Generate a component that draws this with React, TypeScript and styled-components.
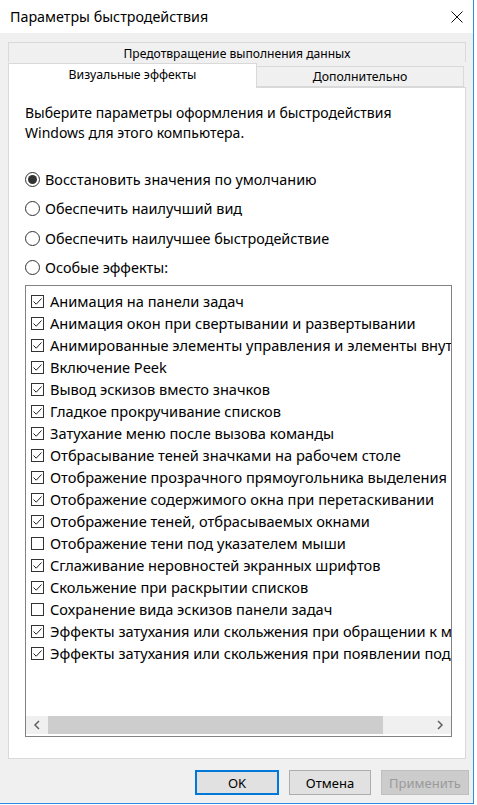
import React from "react";
import styled, { createGlobalStyle } from "styled-components";

const Global = createGlobalStyle`
  html, body { margin: 0; padding: 0; background: #ffffff; }
  body { font-family: "Noto Sans", "Open Sans", sans-serif; color: #000; }
  * { box-sizing: border-box; }
`;

const Win = styled.div`
  width: 474px;
  height: 804px;
  border-right: 1px solid #2b8ee4;
  border-bottom: 1px solid #2b8ee4;
  background: #f0f0f0;
  display: flex;
  flex-direction: column;
`;

const TitleBar = styled.div`
  height: 33px;
  background: #ffffff;
  display: flex;
  align-items: center;
  justify-content: space-between;
  padding: 0 10px 0 10px;
`;

const Title = styled.div`
  font-size: 14.3px;
  color: #000;
  margin-top: -1px;
`;

const Close = styled.div`
  width: 26px;
  height: 20px;
  display: flex;
  align-items: center;
  justify-content: center;
  margin-right: -7px;
`;

const Body = styled.div`
  flex: 1;
  display: flex;
  flex-direction: column;
  padding: 9px 7px 0 8px;
`;

const TopTab = styled.div`
  height: 20px;
  width: 458px;
  border: 1px solid #d9d9d9;
  border-bottom: none;
  display: flex;
  align-items: center;
  justify-content: center;
  font-size: 12.1px;
  padding-top: 1px;
`;

const TabRow = styled.div`
  display: flex;
  align-items: flex-end;
  height: 25px;
  width: 458px;
  position: relative;
  z-index: 1;
`;

const Tab = styled.div<{ $active?: boolean }>`
  height: ${(p) => (p.$active ? "25px" : "21px")};
  width: ${(p) => (p.$active ? "249px" : "207px")};
  margin-bottom: ${(p) => (p.$active ? "-1px" : "0")};
  background: ${(p) => (p.$active ? "#ffffff" : "#f0f0f0")};
  border: 1px solid #d9d9d9;
  border-bottom: ${(p) => (p.$active ? "none" : "1px solid #d9d9d9")};
  border-left: ${(p) => (p.$active ? "1px solid #d9d9d9" : "none")};
  display: flex;
  align-items: center;
  justify-content: center;
  font-size: 12.3px;
  padding-bottom: ${(p) => (p.$active ? "4px" : "0")};
`;

const Panel = styled.div`
  width: 458px;
  height: 672px;
  background: #ffffff;
  border: 1px solid #d9d9d9;
  padding: 15px 0 0 16px;
  display: flex;
  flex-direction: column;
`;

const Intro = styled.div`
  font-size: 14px;
  line-height: 20px;
  margin-bottom: 26px;
`;

const Radios = styled.div`
  display: flex;
  flex-direction: column;
  gap: 9px;
  margin-bottom: 7px;
`;

const RadioRow = styled.div`
  display: flex;
  align-items: center;
  height: 20.5px;
  font-size: 14.4px;
  gap: 5px;
`;

const RadioCircle = styled.span<{ $on?: boolean }>`
  width: 15px;
  height: 15px;
  border-radius: 50%;
  border: 1px solid #333333;
  display: flex;
  align-items: center;
  justify-content: center;
  flex: none;
  &::after {
    content: "";
    display: ${(p) => (p.$on ? "block" : "none")};
    width: 9px;
    height: 9px;
    border-radius: 50%;
    background: #333333;
  }
`;

const ListBox = styled.div`
  width: 427px;
  height: 452px;
  border: 1px solid #828282;
  display: flex;
  flex-direction: column;
  overflow: hidden;
`;

const Items = styled.div`
  flex: 1;
  padding: 4px 0 0 5px;
  overflow: hidden;
`;

const ItemRow = styled.div`
  display: flex;
  align-items: center;
  height: 22px;
  gap: 6px;
  white-space: nowrap;
  font-size: 14.6px;
`;

const Box = styled.span`
  width: 13px;
  height: 13px;
  border: 1px solid #333333;
  flex: none;
  display: flex;
  align-items: center;
  justify-content: center;
  background: #fff;
`;

const HScroll = styled.div`
  height: 18px;
  margin: 0 0 2px 0;
  background: #f0f0f0;
  display: flex;
  align-items: stretch;
`;

const Arrow = styled.div`
  width: 22px;
  display: flex;
  align-items: center;
  justify-content: center;
  flex: none;
`;

const Track = styled.div`
  flex: 1;
  display: flex;
  align-items: stretch;
`;

const Thumb = styled.div`
  background: #cdcdcd;
  width: 335px;
`;

const Buttons = styled.div`
  display: flex;
  justify-content: flex-end;
  gap: 10px;
  padding: 11px 0 0 0;
  margin-right: -3px;
`;

const Btn = styled.div<{ $primary?: boolean; $disabled?: boolean; $w: number }>`
  width: ${(p) => p.$w}px;
  height: 25px;
  display: flex;
  align-items: center;
  justify-content: center;
  font-size: 13px;
  background: ${(p) => (p.$disabled ? "#cccccc" : "#e1e1e1")};
  color: ${(p) => (p.$disabled ? "#9a9a9a" : "#000")};
  border: ${(p) =>
    p.$primary ? "2px solid #0078d7" : p.$disabled ? "1px solid #bfbfbf" : "1px solid #adadad"};
`;

const items: [string, boolean][] = [
  ["Анимация на панели задач", true],
  ["Анимация окон при свертывании и развертывании", true],
  ["Анимированные элементы управления и элементы внутри окна", true],
  ["Включение Peek", true],
  ["Вывод эскизов вместо значков", true],
  ["Гладкое прокручивание списков", true],
  ["Затухание меню после вызова команды", true],
  ["Отбрасывание теней значками на рабочем столе", true],
  ["Отображение прозрачного прямоугольника выделения", true],
  ["Отображение содержимого окна при перетаскивании", true],
  ["Отображение теней, отбрасываемых окнами", true],
  ["Отображение тени под указателем мыши", false],
  ["Сглаживание неровностей экранных шрифтов", true],
  ["Скольжение при раскрытии списков", true],
  ["Сохранение вида эскизов панели задач", false],
  ["Эффекты затухания или скольжения при обращении к меню", true],
  ["Эффекты затухания или скольжения при появлении подсказок", true],
];

const radios: [string, boolean][] = [
  ["Восстановить значения по умолчанию", true],
  ["Обеспечить наилучший вид", false],
  ["Обеспечить наилучшее быстродействие", false],
  ["Особые эффекты:", false],
];

const Check = () => (
  <svg width="11" height="11" viewBox="0 0 11 11">
    <polyline points="1.5,5.5 4.2,8.2 9.5,2.5" fill="none" stroke="#222" strokeWidth="1" />
  </svg>
);

export default function App() {
  return (
    <>
      <Global />
      <Win>
        <TitleBar>
          <Title>Параметры быстродействия</Title>
          <Close>
            <svg width="12" height="12" viewBox="0 0 12 12">
              <path d="M0.5 0.5 L11.5 11.5 M11.5 0.5 L0.5 11.5" stroke="#111" strokeWidth="1" />
            </svg>
          </Close>
        </TitleBar>
        <Body>
          <TopTab>Предотвращение выполнения данных</TopTab>
          <TabRow>
            <Tab $active>Визуальные эффекты</Tab>
            <Tab>Дополнительно</Tab>
          </TabRow>
          <Panel>
            <Intro>
              Выберите параметры оформления и быстродействия
              <br />
              Windows для этого компьютера.
            </Intro>
            <Radios>
              {radios.map(([t, on]) => (
                <RadioRow key={t}>
                  <RadioCircle $on={on} />
                  {t}
                </RadioRow>
              ))}
            </Radios>
            <ListBox>
              <Items>
                {items.map(([t, on]) => (
                  <ItemRow key={t}>
                    <Box>{on && <Check />}</Box>
                    {t}
                  </ItemRow>
                ))}
              </Items>
              <HScroll>
                <Arrow>
                  <svg width="8" height="10" viewBox="0 0 8 10">
                    <polyline points="6,1 2,5 6,9" fill="none" stroke="#606060" strokeWidth="1.5" />
                  </svg>
                </Arrow>
                <Track>
                  <Thumb />
                </Track>
                <Arrow>
                  <svg width="8" height="10" viewBox="0 0 8 10">
                    <polyline points="2,1 6,5 2,9" fill="none" stroke="#606060" strokeWidth="1.5" />
                  </svg>
                </Arrow>
              </HScroll>
            </ListBox>
          </Panel>
          <Buttons>
            <Btn $primary $w={84}>OK</Btn>
            <Btn $w={82}>Отмена</Btn>
            <Btn $disabled $w={88}>Применить</Btn>
          </Buttons>
        </Body>
      </Win>
    </>
  );
}
